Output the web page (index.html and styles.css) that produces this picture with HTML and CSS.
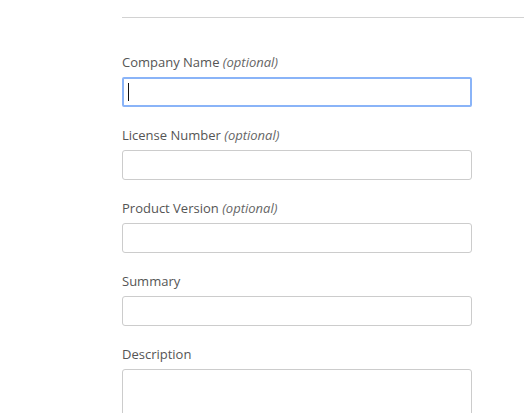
FILE: index.html
```html
<!DOCTYPE html>
<html>
<head>
<meta charset="utf-8">
<link rel="stylesheet" href="styles.css">
</head>
<body>
<div class="page">
  <div class="rule"></div>
  <form class="form">
    <div class="group">
      <label class="label">Company Name <em>(optional)</em></label>
      <div class="field focused"><span class="caret"></span></div>
    </div>
    <div class="group">
      <label class="label">License Number <em>(optional)</em></label>
      <div class="field"></div>
    </div>
    <div class="group">
      <label class="label">Product Version <em>(optional)</em></label>
      <div class="field"></div>
    </div>
    <div class="group">
      <label class="label">Summary</label>
      <div class="field"></div>
    </div>
    <div class="group">
      <label class="label">Description</label>
      <div class="field area"></div>
    </div>
  </form>
</div>
</body>
</html>
```
FILE: styles.css
```css
html, body {
  margin: 0;
  padding: 0;
  background: #fff;
  overflow: hidden;
}
.page {
  padding-left: 122px;
  padding-top: 17px;
  font-family: "Open Sans", "Noto Sans", sans-serif;
  font-size: 13px;
  color: #555;
}
.rule {
  height: 1px;
  background: #d2d2d2;
}
.form {
  width: 350px;
  padding-top: 35px;
}
.group {
  margin-bottom: 19px;
}
.label {
  display: block;
  line-height: 18px;
  margin-bottom: 6px;
}
.label em {
  font-style: italic;
  color: #666;
}
.field {
  box-sizing: border-box;
  height: 30px;
  border: 1px solid #cccccc;
  border-radius: 3px;
  background: #fff;
  display: flex;
  align-items: center;
  padding-left: 6px;
}
.field.focused {
  border: 2px solid #8ab4f8;
  border-radius: 2px;
  padding-left: 4px;
}
.caret {
  width: 1px;
  height: 18px;
  background: #111;
}
.field.area {
  height: 80px;
}
```
